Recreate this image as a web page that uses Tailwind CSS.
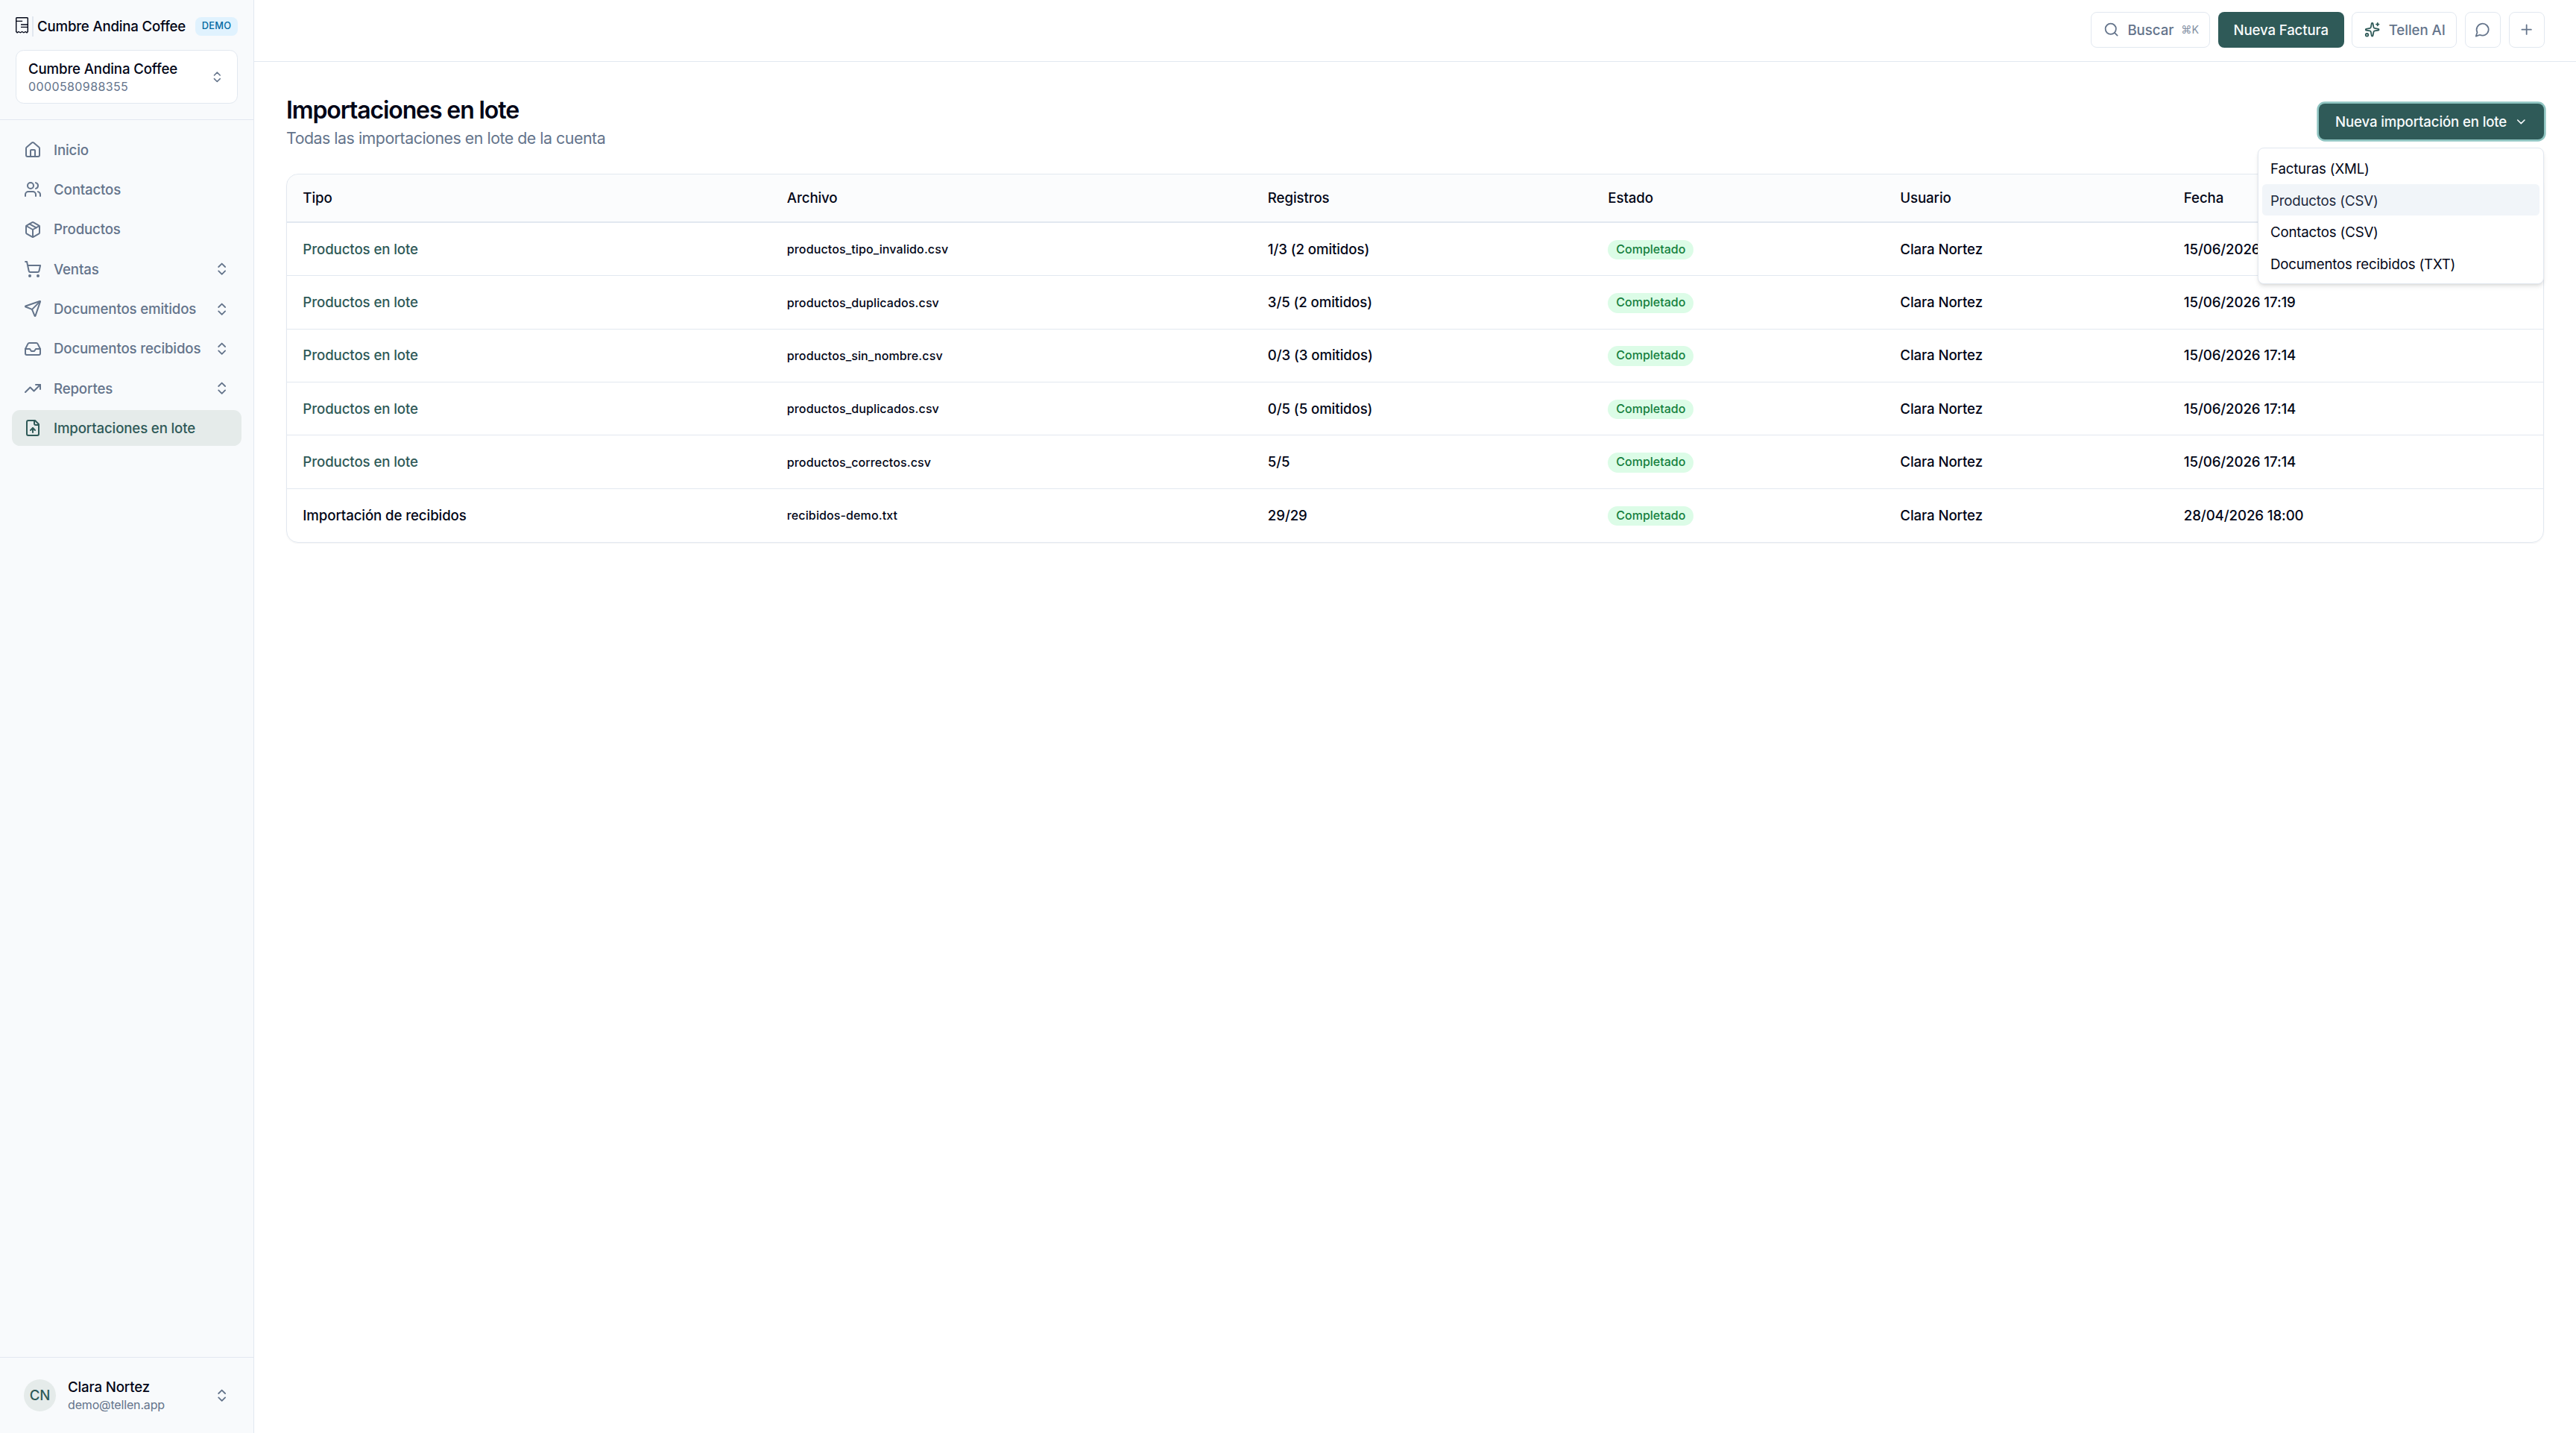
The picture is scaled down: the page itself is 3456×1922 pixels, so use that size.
<!DOCTYPE html>
<html lang="es" class="text-[21.3333px]">

<head>
    <meta charset="UTF-8">
    <meta name="viewport" content="width=device-width, initial-scale=1.0">
    <title>Importaciones en lote</title>
    <script src="https://cdn.jsdelivr.net/npm/@tailwindcss/browser@4"></script>
</head>

<body class="font-['Inter',sans-serif] text-[#020617] bg-white">

    <!-- Icons -->
    <svg class="hidden">
        <symbol id="chevrons" viewBox="0 0 24 24"><path d="m7 15 5 5 5-5" /><path d="m7 9 5-5 5 5" /></symbol>
        <symbol id="house" viewBox="0 0 24 24"><path d="M15 21v-8a1 1 0 0 0-1-1h-4a1 1 0 0 0-1 1v8" /><path d="M3 10a2 2 0 0 1 .709-1.528l7-5.999a2 2 0 0 1 2.582 0l7 5.999A2 2 0 0 1 21 10v9a2 2 0 0 1-2 2H5a2 2 0 0 1-2-2z" /></symbol>
        <symbol id="users" viewBox="0 0 24 24"><path d="M16 21v-2a4 4 0 0 0-4-4H6a4 4 0 0 0-4 4v2" /><circle cx="9" cy="7" r="4" /><path d="M22 21v-2a4 4 0 0 0-3-3.87" /><path d="M16 3.13a4 4 0 0 1 0 7.75" /></symbol>
        <symbol id="package" viewBox="0 0 24 24"><path d="M11 21.73a2 2 0 0 0 2 0l7-4A2 2 0 0 0 21 16V8a2 2 0 0 0-1-1.73l-7-4a2 2 0 0 0-2 0l-7 4A2 2 0 0 0 3 8v8a2 2 0 0 0 1 1.73z" /><path d="M12 22V12" /><path d="m3.3 7 8.7 5 8.7-5" /><path d="m7.5 4.27 9 5.15" /></symbol>
        <symbol id="cart" viewBox="0 0 24 24"><circle cx="8" cy="21" r="1" /><circle cx="19" cy="21" r="1" /><path d="M2.05 2.05h2l2.66 12.42a2 2 0 0 0 2 1.58h9.78a2 2 0 0 0 1.95-1.57l1.65-7.43H5.12" /></symbol>
        <symbol id="send" viewBox="0 0 24 24"><path d="M14.536 21.686a.5.5 0 0 0 .937-.024l6.5-19a.496.496 0 0 0-.635-.635l-19 6.5a.5.5 0 0 0-.024.937l7.93 3.18a2 2 0 0 1 1.112 1.11z" /><path d="m21.854 2.147-10.94 10.939" /></symbol>
        <symbol id="inbox" viewBox="0 0 24 24"><path d="M22 12h-6l-2 3h-4l-2-3H2" /><path d="M5.45 5.11 2 12v6a2 2 0 0 0 2 2h16a2 2 0 0 0 2-2v-6l-3.45-6.89A2 2 0 0 0 16.76 4H7.24a2 2 0 0 0-1.79 1.11z" /></symbol>
        <symbol id="trending" viewBox="0 0 24 24"><path d="m22 7-8.5 8.5-5-5L2 17" /><path d="M16 7h6v6" /></symbol>
        <symbol id="file-up" viewBox="0 0 24 24"><path d="M15 2H6a2 2 0 0 0-2 2v16a2 2 0 0 0 2 2h12a2 2 0 0 0 2-2V7Z" /><path d="M14 2v4a2 2 0 0 0 2 2h4" /><path d="M12 12v6" /><path d="m15 15-3-3-3 3" /></symbol>
    </svg>

    <div class="flex h-screen">

        <!-- Sidebar -->
        <aside class="w-[341px] shrink-0 flex flex-col bg-slate-50 border-r border-slate-200 tracking-[-0.15px]">
            <div class="h-[161px] px-[21px] pt-[22px] border-b border-slate-200">
                <div class="flex items-center h-[27px]">
                    <svg class="w-[17px] h-[22px] mb-[3px]" viewBox="0 0 17 22" fill="none" stroke="currentColor" stroke-width="1.4">
                        <path d="M.7 19.5V1.6q0-.8.8-.8h14q.8 0 .8.8v17.9l-1.3 1.3-1.8-1.3-2.3 1.3-2.3-1.3-2.3 1.3-2.4-1.3-1.8 1.3z" />
                        <path d="M.7 5.4h8.4M7 10h9.3M7 13.4h9.3" />
                    </svg>
                    <span class="w-[2px] h-[27px] ml-[5px] bg-slate-200"></span>
                    <span class="ml-[5px] pt-[2px] text-sm font-medium whitespace-nowrap tracking-[-0.2px]">Cumbre Andina Coffee</span>
                    <span class="ml-auto w-[57px] h-[25px] rounded-md bg-[#e0f2fe] text-[#0369a1] text-[12.8px] leading-[24px] font-medium tracking-[0.3px] text-center">DEMO</span>
                </div>
                <div class="mt-[18px] h-[72px] flex items-center justify-between pl-[16px] pr-[17px] rounded-lg border border-slate-200 bg-white">
                    <div class="pt-[2px]">
                        <p class="text-sm leading-[24px] font-medium">Cumbre Andina Coffee</p>
                        <p class="text-xs leading-[23px] text-[#64748b] tracking-[0.4px]">0000580988355</p>
                    </div>
                    <svg class="size-[18.67px] text-[#64748b]" fill="none" stroke="currentColor" stroke-width="2" stroke-linecap="round" stroke-linejoin="round"><use href="#chevrons" /></svg>
                </div>
            </div>

            <nav id="nav" class="flex-1 flex flex-col gap-1 p-[16px]"></nav>

            <div class="h-[102px] flex items-center px-[32px] border-t border-slate-200">
                <span class="size-[43px] pt-[1px] rounded-full bg-[#e5ebea] text-[#2f5a58] text-sm font-medium flex items-center justify-center">CN</span>
                <div class="ml-[16px] pt-[2px]">
                    <p class="text-sm leading-[24px] font-medium">Clara Nortez</p>
                    <p class="text-xs leading-[23px] text-[#64748b]">demo@tellen.app</p>
                </div>
                <svg class="ml-auto size-[21.33px] text-[#64748b]" fill="none" stroke="currentColor" stroke-width="2" stroke-linecap="round" stroke-linejoin="round"><use href="#chevrons" /></svg>
            </div>
        </aside>

        <div class="flex-1">
            <!-- Top bar -->
            <header class="h-[83px] flex items-center justify-end gap-[10.67px] pr-[42.33px] pb-[2px] border-b border-slate-200 text-sm font-medium text-[#64748b] tracking-[-0.05px]">
                <button class="h-[48px] w-[160px] flex items-center pl-[16px] rounded-md border border-slate-200">
                    <svg class="size-[21.33px]" viewBox="0 0 24 24" fill="none" stroke="currentColor" stroke-width="2" stroke-linecap="round"><circle cx="11" cy="11" r="8" /><path d="m21 21-4.3-4.3" /></svg>
                    <span class="ml-[11px] pt-[2px]">Buscar</span>
                    <span class="ml-[10px] text-[14.2px] font-normal opacity-80">⌘K</span>
                </button>
                <button class="h-[48px] w-[169px] pt-[3px] rounded-md bg-[#2f5a58] text-slate-50 tracking-[-0.15px]">Nueva Factura</button>
                <button class="h-[48px] w-[141px] flex items-center pl-[16px] rounded-md border border-slate-200">
                    <svg class="size-[21.33px] text-[#2f5a58]" viewBox="0 0 24 24" fill="none" stroke="currentColor" stroke-width="2" stroke-linecap="round" stroke-linejoin="round"><path d="M11.017 2.814a1 1 0 0 1 1.966 0l1.051 5.558a2 2 0 0 0 1.594 1.594l5.558 1.051a1 1 0 0 1 0 1.966l-5.558 1.051a2 2 0 0 0-1.594 1.594l-1.051 5.558a1 1 0 0 1-1.966 0l-1.051-5.558a2 2 0 0 0-1.594-1.594l-5.558-1.051a1 1 0 0 1 0-1.966l5.558-1.051a2 2 0 0 0 1.594-1.594z" /><path d="M20 2v4M22 4h-4" /><circle cx="4" cy="20" r="2" /></svg>
                    <span class="ml-[11px] pt-[2px]">Tellen AI</span>
                </button>
                <button class="size-[48px] flex items-center justify-center rounded-md border border-slate-200">
                    <svg class="size-[21.33px]" viewBox="0 0 24 24" fill="none" stroke="currentColor" stroke-width="2" stroke-linecap="round" stroke-linejoin="round"><path d="M7.9 20A9 9 0 1 0 4 16.1L2 22Z" /></svg>
                </button>
                <button class="size-[48px] flex items-center justify-center rounded-md border border-slate-200">
                    <svg class="size-[21.33px]" viewBox="0 0 24 24" fill="none" stroke="currentColor" stroke-width="2" stroke-linecap="round"><path d="M5 12h14M12 5v14" /></svg>
                </button>
            </header>

            <main class="px-[43px] pt-[43px]">
                <div class="flex justify-between items-start h-[107px]">
                    <div>
                        <h1 class="text-2xl leading-[43px] font-semibold tracking-[-1.1px]">Importaciones en lote</h1>
                        <p class="text-base leading-[32px] text-[#64748b] tracking-[-0.47px]">Todas las importaciones en lote de la cuenta</p>
                    </div>
                    <div class="relative mt-[13px]">
                        <button class="h-[48px] w-[302px] flex items-center pl-[22px] rounded-md bg-[#2f5a58] text-slate-50 text-sm font-medium tracking-[-0.15px] ring-[2.67px] ring-[#8fc4c1]">
                            <span class="pt-[2px]">Nueva importación en lote</span>
                            <svg class="ml-[10px] size-[18.67px]" viewBox="0 0 24 24" fill="none" stroke="currentColor" stroke-width="2" stroke-linecap="round" stroke-linejoin="round"><path d="m6 9 6 6 6-6" /></svg>
                        </button>
                        <!-- Dropdown -->
                        <div class="absolute z-10 right-0 top-[59px] w-[384px] p-[5px] rounded-md border border-slate-200 bg-white shadow-md text-sm tracking-[-0.18px]">
                            <p class="h-[42.67px] px-[11px] leading-[45.33px]">Facturas (XML)</p>
                            <p class="h-[42.67px] px-[11px] leading-[45.33px] rounded-sm bg-slate-100 text-slate-800">Productos (CSV)</p>
                            <p class="h-[42.67px] px-[11px] leading-[45.33px]">Contactos (CSV)</p>
                            <p class="h-[42.67px] px-[11px] leading-[45.33px]">Documentos recibidos (TXT)</p>
                        </div>
                    </div>
                </div>

                <div class="rounded-xl border border-slate-200 shadow-xs overflow-hidden text-sm font-medium tracking-[-0.1px]">
                    <div class="grid grid-cols-[649.5px_645px_456.5px_392px_380.5px_1fr] h-[65px] pt-[2px] items-center border-b-2 border-slate-200 bg-slate-50/50 *:px-4">
                        <span>Tipo</span>
                        <span>Archivo</span>
                        <span>Registros</span>
                        <span>Estado</span>
                        <span>Usuario</span>
                        <span>Fecha</span>
                    </div>
                    <div id="rows" class="divide-y divide-slate-200"></div>
                </div>
            </main>
        </div>
    </div>

    <script>
        const navItems = [
            ['house', 'Inicio', false],
            ['users', 'Contactos', false],
            ['package', 'Productos', false],
            ['cart', 'Ventas', true],
            ['send', 'Documentos emitidos', true],
            ['inbox', 'Documentos recibidos', true],
            ['trending', 'Reportes', true],
            ['file-up', 'Importaciones en lote', false],
        ];
        const stroke = 'fill="none" stroke="currentColor" stroke-width="2" stroke-linecap="round" stroke-linejoin="round"';

        document.getElementById('nav').innerHTML = navItems.map(([icon, label, open]) => `
            <a href="#" class="h-[48px] flex items-center px-[16px] rounded-lg text-sm font-medium ${icon === 'file-up' ? 'bg-[#e5ebea] text-[#2f5a58]' : 'text-[#64748b]'}">
                <svg class="size-[24px]" ${stroke}><use href="#${icon}" /></svg>
                <span class="ml-[16px] pt-[2px] whitespace-nowrap">${label}</span>
                ${open ? `<svg class="ml-auto size-[21.33px]" ${stroke}><use href="#chevrons" /></svg>` : ''}
            </a>`).join('');

        const rows = [
            ['Productos en lote', 'productos_tipo_invalido.csv', '1/3 (2 omitidos)', '15/06/2026 17:19'],
            ['Productos en lote', 'productos_duplicados.csv', '3/5 (2 omitidos)', '15/06/2026 17:19'],
            ['Productos en lote', 'productos_sin_nombre.csv', '0/3 (3 omitidos)', '15/06/2026 17:14'],
            ['Productos en lote', 'productos_duplicados.csv', '0/5 (5 omitidos)', '15/06/2026 17:14'],
            ['Productos en lote', 'productos_correctos.csv', '5/5', '15/06/2026 17:14'],
            ['Importación de recibidos', 'recibidos-demo.txt', '29/29', '28/04/2026 18:00'],
        ];

        document.getElementById('rows').innerHTML = rows.map(([tipo, archivo, registros, fecha]) => `
            <div class="grid grid-cols-[649.5px_645px_456.5px_392px_380.5px_1fr] h-[71.33px] pt-[1.5px] items-center *:px-4">
                <span class="${tipo === 'Productos en lote' ? 'text-[#2f5a58]' : ''}">${tipo}</span>
                <span class="text-xs tracking-[0.13px]">${archivo}</span>
                <span>${registros}</span>
                <span class="flex"><b class="h-[26.67px] px-[11px] rounded-full bg-[#dcfce7] text-[#15803d] text-xs leading-[26px] font-medium tracking-normal">Completado</b></span>
                <span>Clara Nortez</span>
                <span>${fecha}</span>
            </div>`).join('');
    </script>
</body>

</html>
